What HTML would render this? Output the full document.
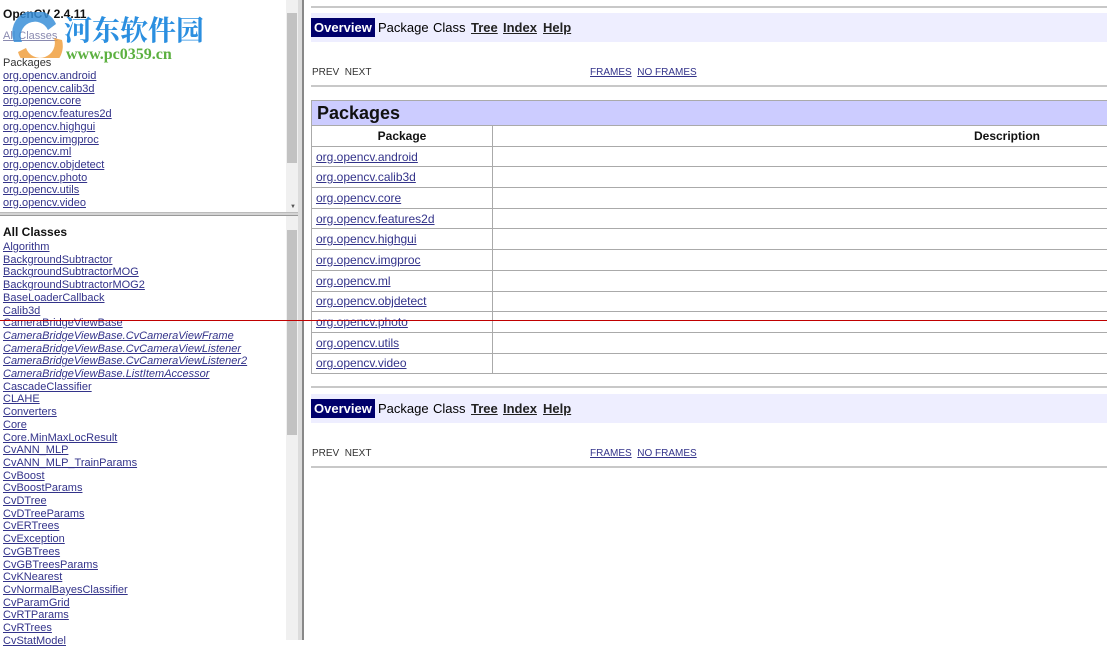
<!DOCTYPE html>
<html><head><meta charset="utf-8"><style>
*{margin:0;padding:0;box-sizing:border-box}
body{width:1107px;height:640px;overflow:hidden;background:#fff;font-family:"Liberation Sans",Arial,sans-serif;position:relative}
.a{position:absolute}
a{color:#33338a;text-decoration:underline}
.lst{font-size:11px;line-height:12.7px;left:3px}
.lst a{display:block;white-space:nowrap}
.nav{position:absolute;left:311px;width:796px;height:29px;background:#eeeeff;font-size:13px}
.nav span{position:absolute;top:7px}
.nav b u{color:#222}
.ov{background:#00006b;color:#fff;font-weight:bold;height:19px;padding:2px 3px 0 3px;top:5px!important}
.small{font-size:10px;color:#333}
.hr{position:absolute;left:311px;width:796px;height:2px;background:#c8c8c8}
table{position:absolute;left:311px;top:100px;width:800px;border-collapse:collapse}
td,th{border:1px solid #aaa;height:20.7px;font-size:12px;padding:0 4px}
td a{font-size:12px}
</style></head><body>
<div class="a" style="left:3px;top:7px;font-size:12px;font-weight:bold;color:#111">OpenCV 2.4.11</div>
<div class="a" style="left:3px;top:30px;font-size:11px"><a style="color:#8a8ab0">All Classes</a></div>
<div class="a" style="left:3px;top:57px;font-size:11px;color:#333">Packages</div>
<div class="a lst" style="top:70px">
<a>org.opencv.android</a><a>org.opencv.calib3d</a><a>org.opencv.core</a><a>org.opencv.features2d</a><a>org.opencv.highgui</a><a>org.opencv.imgproc</a><a>org.opencv.ml</a><a>org.opencv.objdetect</a><a>org.opencv.photo</a><a>org.opencv.utils</a><a>org.opencv.video</a></div>
<svg class="a" style="left:8px;top:12px" width="56" height="46"><path d="M6 30 A22 22 0 0 1 48 12 L40 18 A14 14 0 0 0 14 30Z" fill="#3a8fd8" opacity=".85"/><path d="M10 40 A22 22 0 0 0 54 28 L46 26 A14 14 0 0 1 18 36Z" fill="#f0a040" opacity=".85"/></svg>
<div class="a" style="left:64px;top:12px;font-size:28px;font-weight:bold;color:#2b8fe0;font-family:'Noto Serif CJK SC','Noto Sans CJK SC',sans-serif;line-height:34px">河东软件园</div>
<div class="a" style="left:66px;top:46px;font-size:16px;font-weight:bold;color:#5cb040;font-family:'Liberation Serif',serif">www.pc0359.cn</div>
<div class="a" style="left:286px;top:0;width:12px;height:213px;background:#f0f0f0"></div>
<div class="a" style="left:287px;top:13px;width:10px;height:150px;background:#c2c2c2"></div>
<div class="a" style="left:290px;top:204px;font-size:6px;color:#555">▼</div>
<div class="a" style="left:0;top:212px;width:300px;height:4px;background:#d4d4d4;border-top:1px solid #bbb;border-bottom:1px solid #999"></div>
<div class="a" style="left:3px;top:225px;font-size:12px;font-weight:bold;color:#111">All Classes</div>
<div class="a lst" style="top:241px">
<a>Algorithm</a><a>BackgroundSubtractor</a><a>BackgroundSubtractorMOG</a><a>BackgroundSubtractorMOG2</a><a>BaseLoaderCallback</a><a>Calib3d</a><a>CameraBridgeViewBase</a><a><i>CameraBridgeViewBase.CvCameraViewFrame</i></a><a><i>CameraBridgeViewBase.CvCameraViewListener</i></a><a><i>CameraBridgeViewBase.CvCameraViewListener2</i></a><a><i>CameraBridgeViewBase.ListItemAccessor</i></a><a>CascadeClassifier</a><a>CLAHE</a><a>Converters</a><a>Core</a><a>Core.MinMaxLocResult</a><a>CvANN_MLP</a><a>CvANN_MLP_TrainParams</a><a>CvBoost</a><a>CvBoostParams</a><a>CvDTree</a><a>CvDTreeParams</a><a>CvERTrees</a><a>CvException</a><a>CvGBTrees</a><a>CvGBTreesParams</a><a>CvKNearest</a><a>CvNormalBayesClassifier</a><a>CvParamGrid</a><a>CvRTParams</a><a>CvRTrees</a><a>CvStatModel</a></div>
<div class="a" style="left:286px;top:216px;width:12px;height:424px;background:#f0f0f0"></div>
<div class="a" style="left:287px;top:230px;width:10px;height:205px;background:#c2c2c2"></div>
<div class="a" style="left:298px;top:0;width:6px;height:640px;background:#dcdcdc;border-right:2px solid #888"></div>
<div class="hr" style="top:6px"></div>
<div class="nav" style="top:13px"><span class="ov">Overview</span><span style="left:67px">Package</span><span style="left:122px">Class</span><span style="left:160px"><b><u>Tree</u></b></span><span style="left:192px"><b><u>Index</u></b></span><span style="left:232px"><b><u>Help</u></b></span></div>
<div class="a small" style="left:312px;top:67px">PREV&nbsp; NEXT</div>
<div class="a small" style="left:590px;top:67px"><a>FRAMES</a>&nbsp; <a>NO FRAMES</a></div>
<div class="hr" style="top:85px"></div>
<table>
<tr><td colspan="2" style="background:#ccccff;font-size:18px;font-weight:bold;height:25px;color:#111;padding-left:5px">Packages</td></tr>
<tr><th style="width:181px;color:#111">Package</th><th style="text-align:right;padding-right:70px;color:#111">Description</th></tr>
<tr><td><a>org.opencv.android</a></td><td></td></tr>
<tr><td><a>org.opencv.calib3d</a></td><td></td></tr>
<tr><td><a>org.opencv.core</a></td><td></td></tr>
<tr><td><a>org.opencv.features2d</a></td><td></td></tr>
<tr><td><a>org.opencv.highgui</a></td><td></td></tr>
<tr><td><a>org.opencv.imgproc</a></td><td></td></tr>
<tr><td><a>org.opencv.ml</a></td><td></td></tr>
<tr><td><a>org.opencv.objdetect</a></td><td></td></tr>
<tr><td><a>org.opencv.photo</a></td><td></td></tr>
<tr><td><a>org.opencv.utils</a></td><td></td></tr>
<tr><td><a>org.opencv.video</a></td><td></td></tr>
</table>
<div class="hr" style="top:386px"></div>
<div class="nav" style="top:394px"><span class="ov">Overview</span><span style="left:67px">Package</span><span style="left:122px">Class</span><span style="left:160px"><b><u>Tree</u></b></span><span style="left:192px"><b><u>Index</u></b></span><span style="left:232px"><b><u>Help</u></b></span></div>
<div class="a small" style="left:312px;top:448px">PREV&nbsp; NEXT</div>
<div class="a small" style="left:590px;top:448px"><a>FRAMES</a>&nbsp; <a>NO FRAMES</a></div>
<div class="hr" style="top:466px"></div>
<div class="a" style="left:0;top:320px;width:1107px;height:1px;background:#c00000"></div>
</body></html>
